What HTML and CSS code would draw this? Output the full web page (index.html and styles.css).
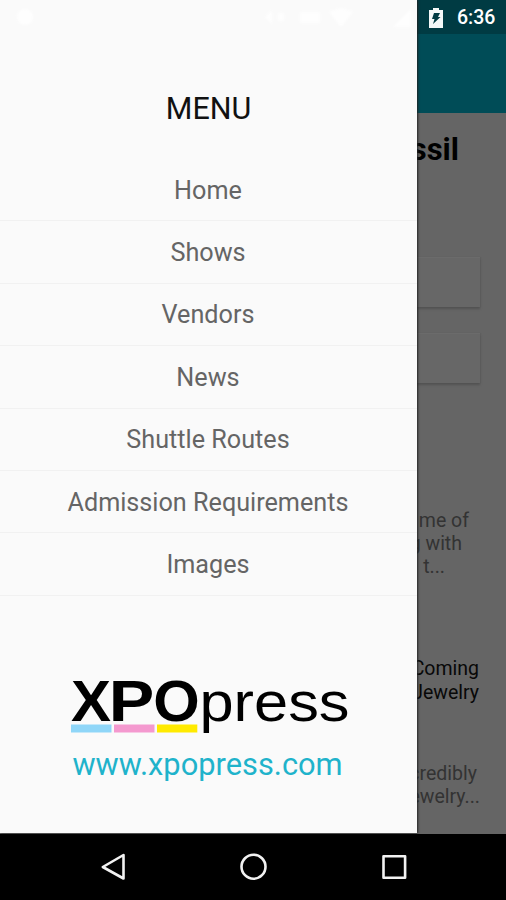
FILE: index.html
```html
<!DOCTYPE html>
<html lang="en">
<head>
<meta charset="utf-8">
<title>XPO Press</title>
<link rel="stylesheet" href="styles.css">
</head>
<body>
<div class="screen">
  <div class="page">
    <header class="status">
      <svg class="battery" width="16" height="20" viewBox="0 0 16 20"><path fill="#f4f8f8" d="M5 0h6v2h4v18H1V2h4z"/><path fill="#003b43" d="M6 5h6l-2 4h2.500L5 16l1.500-5H4z"/></svg>
      <span class="time">6:36</span>
    </header>
    <div class="appbar"></div>
    <main class="content">
      <h1>ssil</h1>
      <div class="field"></div>
      <div class="field"></div>
      <div class="excerpt first">
        <p class="end-of">me of</p>
        <p class="end-with">g with</p>
        <p class="end-t">t...</p>
      </div>
      <div class="headline"><p>Coming</p><p>Jewelry</p></div>
      <div class="excerpt second"><p class="end-cr">credibly</p><p>ewelry...</p></div>
    </main>
  </div>
  <aside class="drawer">
    <svg class="ghost" width="416" height="34" viewBox="0 0 416 34" fill="#fff"><circle cx="25" cy="17" r="8"/><path d="M265 17l7-7v14zM278 13h6v8h-6zM300 12h20v11h-20zM329 12q12-7 24 0l-12 15zM393 27l18-18v18z"/></svg>
    <h2>MENU</h2>
    <nav>
      <a>Home</a>
      <a>Shows</a>
      <a>Vendors</a>
      <a>News</a>
      <a>Shuttle Routes</a>
      <a>Admission Requirements</a>
      <a>Images</a>
    </nav>
    <svg class="logo" width="300" height="72" viewBox="60 669 300 72">
      <text class="xpo" y="720.700"><tspan x="71" textLength="40" lengthAdjust="spacingAndGlyphs">X</tspan><tspan x="108.800" textLength="45.500" lengthAdjust="spacingAndGlyphs">P</tspan><tspan x="153.300" textLength="46.500" lengthAdjust="spacingAndGlyphs">O</tspan></text>
      <text class="press" x="199.500" y="720.700" textLength="150" lengthAdjust="spacingAndGlyphs">press</text>
      <path fill="#8fd6f8" d="M71 724.600h40.500v7.900H71z"/>
      <path fill="#f499cf" d="M114 724.600h40.500v7.900H114z"/>
      <path fill="#ffea00" d="M157 724.600h40.300v7.900H157z"/>
    </svg>
    <a class="site">www.xpopress.com</a>
  </aside>
  <footer class="navbar">
    <svg width="506" height="66" viewBox="0 834 506 66" fill="none" stroke="#f2f2f2" stroke-width="2.600" stroke-linejoin="round"><path d="M102.800 867L123.500 855v23.500z"/><circle cx="253.500" cy="866.700" r="12"/><path d="M383.500 856.200h21.600v21.600h-21.600z"/></svg>
  </footer>
</div>
</body>
</html>
```
FILE: styles.css
```css
* { box-sizing: border-box; }
body { margin: 0; font-family: Roboto, sans-serif; }
h1, h2, p { margin: 0; }
.screen { position: relative; width: 506px; height: 900px; overflow: hidden; display: flex; flex-direction: column; background: #000; }
.page { height: 834px; display: flex; flex-direction: column; background: #656565; }
.status { height: 34px; flex: none; background: #003b43; display: flex; justify-content: flex-end; align-items: center; gap: 13px; padding: 2px 11px 0 0; }
.battery { flex: none; }
.time { color: #fff; font-size: 19.500px; font-weight: 500; line-height: 24px; width: 38px; white-space: nowrap; }
.appbar { height: 79px; flex: none; background: #004c57; }
.content { display: flex; flex-direction: column; text-align: right; padding: 0 26px 0 390px; }
h1 { font-size: 31px; line-height: 36px; font-weight: 700; color: #000; margin: 19px 21px 89px 0; }
.field { height: 50px; background: #676767; border-top: 1px solid #6b6b6b; box-shadow: 0 2px 2px #525252, 1px 0 1px #606060; margin-bottom: 26px; }
.excerpt, .headline { font-size: 19.500px; line-height: 23px; white-space: nowrap; display: flex; flex-direction: column; align-items: flex-end; }
.excerpt { color: #333; }
.first { margin-top: 100px; }
.end-of { padding-right: 11px; }
.end-with { padding-right: 18px; }
.end-t { padding-right: 35px; }
.end-cr { padding-right: 3px; }
.headline { color: #080808; margin-top: 79px; padding-right: 1px; line-height: 24px; }
.second { margin-top: 57px; }
.drawer { position: absolute; left: 0; top: 0; width: 417px; height: 833px; background: #fafafa; box-shadow: 1px 0 2px #222; display: flex; flex-direction: column; align-items: center; }
.ghost { align-self: flex-start; flex: none; filter: blur(1px); opacity: 0.8; }
h2 { font-size: 30.500px; line-height: 36px; font-weight: 400; color: #111; margin: 57px 0 32px; }
nav { align-self: stretch; display: flex; flex-direction: column; }
nav a { height: 62.400px; padding: 1px 1px 0 0; border-bottom: 1px solid #f1f1f1; display: flex; align-items: center; justify-content: center; font-size: 25.200px; color: #656565; }
.logo { margin: 73.200px 0 0 3px; flex: none; }
.xpo, .press { font-family: "Liberation Sans", sans-serif; fill: #000; }
.xpo { font-size: 58px; font-weight: 700; }
.press { font-size: 55px; }
.site { color: #1fb3cb; font-size: 30.800px; line-height: 36px; margin: 6px 2px 0 0; }
.navbar { height: 66px; }
.navbar svg { display: block; }
```
